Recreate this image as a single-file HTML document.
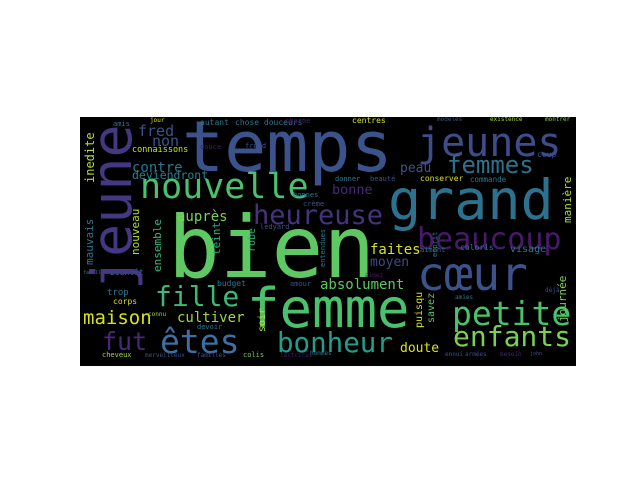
<!DOCTYPE html>
<html><head><meta charset="utf-8"><style>
html,body{margin:0;padding:0;background:#fff;width:640px;height:480px;overflow:hidden}
#c{position:absolute;left:80px;top:117px;width:496px;height:249px;background:#000;overflow:hidden}
#c span{position:absolute;white-space:nowrap;line-height:1;font-family:"DejaVu Sans Mono","Liberation Mono",monospace}
#c .v{transform:rotate(-90deg);transform-origin:0 0}
</style></head><body>
<div id="c">
<span style="left:102px;top:-5px;font-size:70px;color:#3b528b">temps</span>
<span style="left:337px;top:6px;font-size:40px;color:#3e4c8a">jeunes</span>
<span style="left:308px;top:56px;font-size:55px;color:#2c728e">grand</span>
<span style="left:88px;top:88px;font-size:86px;color:#5ec962">bien</span>
<span style="left:167px;top:165px;font-size:54px;color:#4ac16d">femme</span>
<span style="left:337px;top:134px;font-size:46px;color:#3b528b">cœur</span>
<span style="left:372px;top:180px;font-size:33px;color:#4ac16d">petite</span>
<span style="left:373px;top:206px;font-size:28px;color:#7ad151">enfants</span>
<span style="left:60px;top:53px;font-size:35px;color:#4ac16d">nouvelle</span>
<span style="left:173px;top:85px;font-size:27px;color:#46327e">heureuse</span>
<span style="left:337px;top:108px;font-size:30px;color:#481a6c">beaucoup</span>
<span style="left:75px;top:166px;font-size:28px;color:#3aba76">fille</span>
<span style="left:80px;top:208px;font-size:33px;color:#3e6fa0">êtes</span>
<span style="left:197px;top:213px;font-size:27.5px;color:#1f9e89">bonheur</span>
<span style="left:22px;top:212px;font-size:25px;color:#482878">fut</span>
<span style="left:3px;top:192px;font-size:19px;color:#d8e219">maison</span>
<span style="left:97px;top:194px;font-size:14px;color:#a0da39">cultiver</span>
<span style="left:97px;top:93px;font-size:14px;color:#7ad151">auprès</span>
<span style="left:58px;top:7px;font-size:15px;color:#3b528b">fred</span>
<span style="left:72px;top:17px;font-size:15px;color:#3b528b">non</span>
<span style="left:52px;top:29px;font-size:8.5px;color:#c8e020">connaissons</span>
<span style="left:52px;top:44px;font-size:14px;color:#2a788e">contre</span>
<span style="left:52px;top:53px;font-size:11.5px;color:#26828e">deviendront</span>
<span style="left:240px;top:161px;font-size:14px;color:#5ec962">absolument</span>
<span style="left:290px;top:126px;font-size:14px;color:#d8e219">faites</span>
<span style="left:290px;top:139px;font-size:13px;color:#3f4889">moyen</span>
<span style="left:320px;top:225px;font-size:13px;color:#d8e219">doute</span>
<span style="left:367px;top:36px;font-size:24px;color:#2c728e">femmes</span>
<span style="left:320px;top:45px;font-size:13px;color:#3b528b">peau</span>
<span style="left:252px;top:67px;font-size:13.5px;color:#482878">bonne</span>
<span style="left:340px;top:58px;font-size:8px;color:#d8e219">conserver</span>
<span style="left:390px;top:59px;font-size:7.5px;color:#2a788e">commande</span>
<span style="left:255px;top:59px;font-size:7px;color:#2a788e">donner</span>
<span style="left:290px;top:59px;font-size:7px;color:#3b528b">beauté</span>
<span style="left:457px;top:34px;font-size:8px;color:#3b528b">coup</span>
<span style="left:155px;top:2px;font-size:8px;color:#2a788e">chose douceurs</span>
<span style="left:120px;top:2px;font-size:8px;color:#2a788e">autant</span>
<span style="left:272px;top:0px;font-size:8px;color:#d8e219">centres</span>
<span style="left:410px;top:0px;font-size:6px;color:#a0da39">existence</span>
<span style="left:465px;top:0px;font-size:6px;color:#7ad151">montrer</span>
<span style="left:357px;top:0px;font-size:6px;color:#3b528b">modèles</span>
<span style="left:33px;top:4px;font-size:7px;color:#2a788e">amis</span>
<span style="left:70px;top:1px;font-size:6px;color:#d8e219">jour</span>
<span style="left:205px;top:1px;font-size:7px;color:#481a6c">charme</span>
<span style="left:27px;top:172px;font-size:9px;color:#2a788e">trop</span>
<span style="left:33px;top:181px;font-size:8px;color:#d8e219">corps</span>
<span style="left:30px;top:152px;font-size:8px;color:#2a788e">bientôt</span>
<span style="left:3px;top:154px;font-size:5px;color:#2a788e">famille</span>
<span style="left:22px;top:235px;font-size:7px;color:#a0da39">cheveux</span>
<span style="left:65px;top:236px;font-size:6px;color:#3b528b">merveilleux</span>
<span style="left:117px;top:236px;font-size:6px;color:#3b528b">familles</span>
<span style="left:163px;top:235px;font-size:7px;color:#7ad151">colis</span>
<span style="left:137px;top:163px;font-size:8px;color:#2a788e">budget</span>
<span style="left:210px;top:164px;font-size:7px;color:#3b528b">amour</span>
<span style="left:117px;top:207px;font-size:7px;color:#2a788e">devoir</span>
<span style="left:68px;top:195px;font-size:6px;color:#a0da39">connu</span>
<span style="left:365px;top:235px;font-size:6px;color:#3b528b">ennui</span>
<span style="left:385px;top:235px;font-size:6px;color:#3b528b">armées</span>
<span style="left:420px;top:235px;font-size:6px;color:#482878">besoin</span>
<span style="left:450px;top:235px;font-size:5px;color:#3b528b">john</span>
<span style="left:340px;top:130px;font-size:7px;color:#2a788e">aiment</span>
<span style="left:380px;top:127px;font-size:8px;color:#2a788e">coloris</span>
<span style="left:430px;top:128px;font-size:10px;color:#2a788e">visage</span>
<span style="left:465px;top:171px;font-size:6px;color:#3b528b">déjà</span>
<span style="left:375px;top:178px;font-size:6px;color:#2a788e">amies</span>
<span style="left:285px;top:156px;font-size:6px;color:#481a6c">aimez</span>
<span style="left:180px;top:107px;font-size:7px;color:#3b528b">ledyard</span>
<span style="left:120px;top:27px;font-size:7px;color:#481a6c">douce</span>
<span style="left:165px;top:26px;font-size:7px;color:#3b528b">froid</span>
<span style="left:200px;top:236px;font-size:6px;color:#481a6c">lectrices</span>
<span style="left:230px;top:234px;font-size:6px;color:#2a788e">hommes</span>
<span style="left:213px;top:75px;font-size:7px;color:#2a788e">bonnes</span>
<span style="left:223px;top:84px;font-size:7px;color:#3b528b">crème</span>
<span class="v" style="left:5px;top:173px;font-size:55px;color:#453882">jeune</span>
<span class="v" style="left:4px;top:66px;font-size:12px;color:#b5de2b">inedite</span>
<span class="v" style="left:4px;top:148px;font-size:11px;color:#2a788e">mauvais</span>
<span class="v" style="left:50px;top:138px;font-size:11px;color:#b5de2b">nouveau</span>
<span class="v" style="left:72px;top:155px;font-size:11px;color:#35b779">ensemble</span>
<span class="v" style="left:131px;top:138px;font-size:11px;color:#29af7f">teint</span>
<span class="v" style="left:168px;top:135px;font-size:10px;color:#29af7f">robe</span>
<span class="v" style="left:178px;top:215px;font-size:10px;color:#bddf26">soir</span>
<span class="v" style="left:335px;top:211px;font-size:10px;color:#d8e219">puisqu</span>
<span class="v" style="left:347px;top:206px;font-size:10px;color:#5ec962">savez</span>
<span class="v" style="left:477px;top:205px;font-size:11px;color:#7ad151">journée</span>
<span class="v" style="left:482px;top:106px;font-size:11px;color:#b5de2b">manière</span>
<span class="v" style="left:240px;top:150px;font-size:7px;color:#2a788e">entendues</span>
<span class="v" style="left:352px;top:140px;font-size:7px;color:#2a788e">esprit</span>
</div>
</body></html>
